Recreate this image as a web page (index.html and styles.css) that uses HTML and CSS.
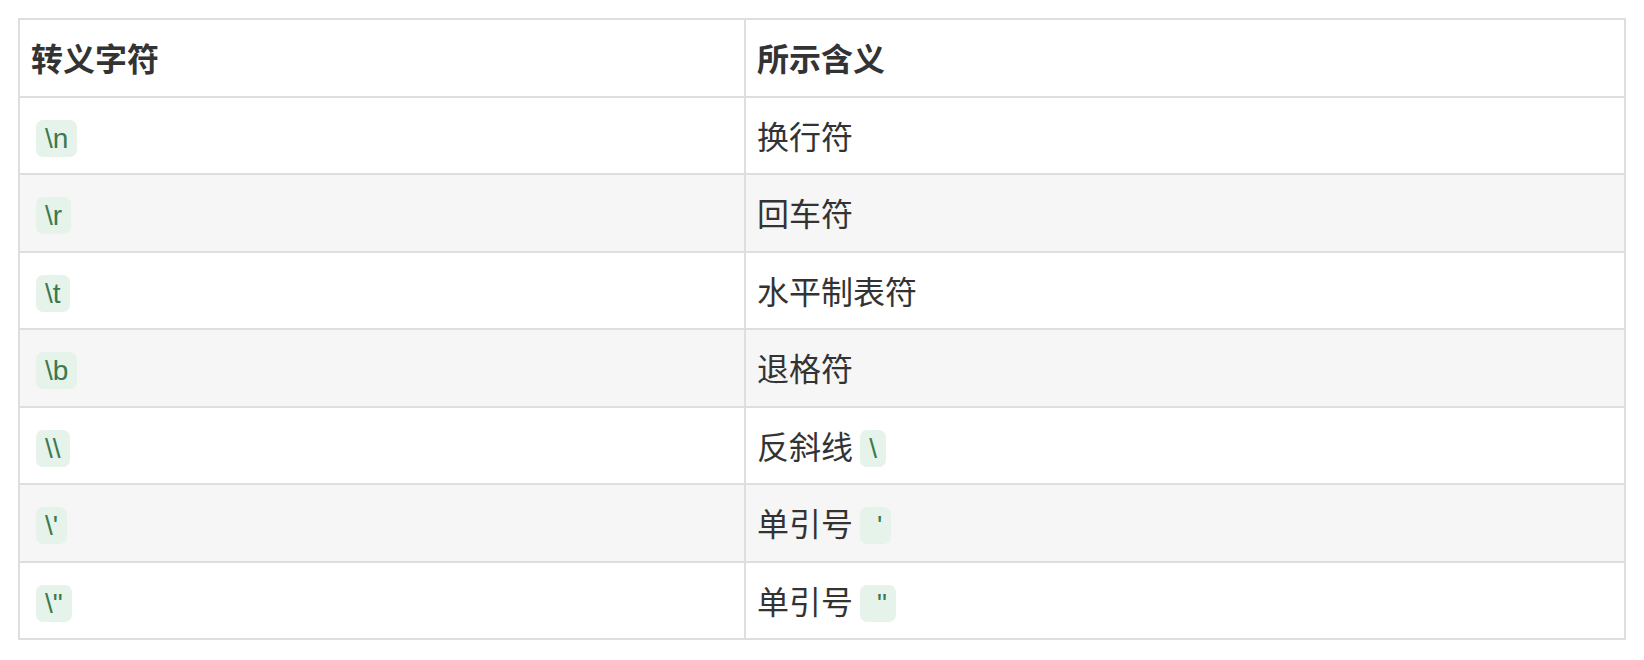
FILE: index.html
```html
<!DOCTYPE html>
<html lang="zh-CN">
<head>
<meta charset="utf-8">
<link rel="stylesheet" href="styles.css">
</head>
<body>
<div class="wrap">
<table class="esc">
<colgroup><col class="c1"><col class="c2"></colgroup>
<thead>
<tr><th>转义字符</th><th>所示含义</th></tr>
</thead>
<tbody>
<tr><td><code class="lead">\n</code></td><td>换行符</td></tr>
<tr><td><code class="lead">\r</code></td><td>回车符</td></tr>
<tr><td><code class="lead">\t</code></td><td>水平制表符</td></tr>
<tr><td><code class="lead">\b</code></td><td>退格符</td></tr>
<tr><td><code class="lead">\\</code></td><td>反斜线 <code>\</code></td></tr>
<tr><td><code class="lead">\'</code></td><td>单引号 <code>&nbsp;'</code></td></tr>
<tr><td><code class="lead">\"</code></td><td>单引号 <code>&nbsp;"</code></td></tr>
</tbody>
</table>
</div>
</body>
</html>
```
FILE: styles.css
```css
html, body {
  margin: 0;
  padding: 0;
  background: #ffffff;
}
.wrap {
  padding: 18px 18px 0 18px;
}
.esc {
  width: 1608px;
  border-collapse: collapse;
  table-layout: fixed;
  border: 2px solid #dedede;
  font-family: "Noto Sans CJK SC", "Liberation Sans", sans-serif;
  font-size: 32px;
  color: #333333;
}
.c1 { width: 726px; }
.esc th,
.esc td {
  border: 2px solid #dedede;
  padding: 12px 11px;
  line-height: 51.5px;
  height: 51.5px;
  text-align: left;
  vertical-align: middle;
}
.esc th {
  font-weight: 700;
}
.esc td {
  font-weight: 400;
}
.esc tbody tr:nth-child(even) td {
  background: #f6f6f6;
}
.esc code {
  font-family: "Liberation Sans", sans-serif;
  font-size: 28px;
  line-height: 1;
  vertical-align: 1px;
  color: #3a7a4e;
  background: #e6f3eb;
  border-radius: 7px;
  padding: 5px 9px 4px 9px;
  margin: 0;
  white-space: pre;
  display: inline-block;
}
.esc code.lead {
  margin-left: 5px;
}
```
